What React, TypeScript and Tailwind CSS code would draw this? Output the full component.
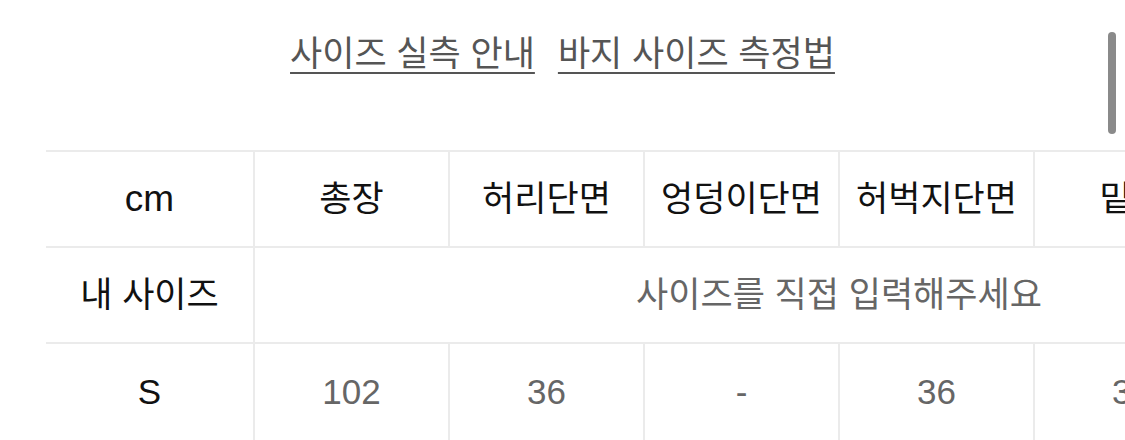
const columns = ["총장", "허리단면", "엉덩이단면", "허벅지단면", "밑위", "밑단단면"];
const sizeRows = [{ label: "S", values: ["102", "36", "-", "36", "31", "18"] }];

export default function App() {
  return (
    <div className="relative h-[440px] w-[1125px] overflow-hidden bg-white font-['Liberation_Sans','Noto_Sans_CJK_KR',sans-serif]">
      <div className="flex justify-center gap-[23px] pt-[32px] text-[35px] leading-[44px] text-[#555]">
        <a className="underline decoration-2 underline-offset-[6px]">사이즈 실측 안내</a>
        <a className="underline decoration-2 underline-offset-[6px]">바지 사이즈 측정법</a>
      </div>

      {/* scrollbar thumb */}
      <div className="absolute left-[1108px] top-[32px] h-[102px] w-[8px] rounded-full bg-[#8a8a8a]" />

      <div className="mt-[74px] pl-[46px]">
        <div className="grid w-max grid-cols-[207px_195px_195px_195px_195px_195px_195px] border-t-2 border-[#ebebeb]">
          <div className="flex h-[96px] items-center justify-center border-b-2 border-[#ebebeb] text-[37px] text-[#111]">
            cm
          </div>
          {columns.map((c) => (
            <div
              key={c}
              className="flex h-[96px] items-center justify-center border-b-2 border-l-2 border-[#ebebeb] text-[35px] text-[#111]"
            >
              {c}
            </div>
          ))}

          <div className="flex h-[96px] items-center justify-center border-b-2 border-[#ebebeb] text-[35px] text-[#111]">
            내 사이즈
          </div>
          <div className="col-span-6 flex h-[96px] items-center justify-center border-b-2 border-l-2 border-[#ebebeb] text-[35px] text-[#666]">
            사이즈를 직접 입력해주세요
          </div>

          {sizeRows.map((row) => (
            <>
              <div
                key={row.label}
                className="flex h-[96px] items-center justify-center text-[35px] text-[#111]"
              >
                {row.label}
              </div>
              {row.values.map((v, i) => (
                <div
                  key={i}
                  className="flex h-[96px] items-center justify-center border-l-2 border-[#ebebeb] text-[35px] text-[#666]"
                >
                  {v}
                </div>
              ))}
            </>
          ))}
        </div>
      </div>
    </div>
  );
}
